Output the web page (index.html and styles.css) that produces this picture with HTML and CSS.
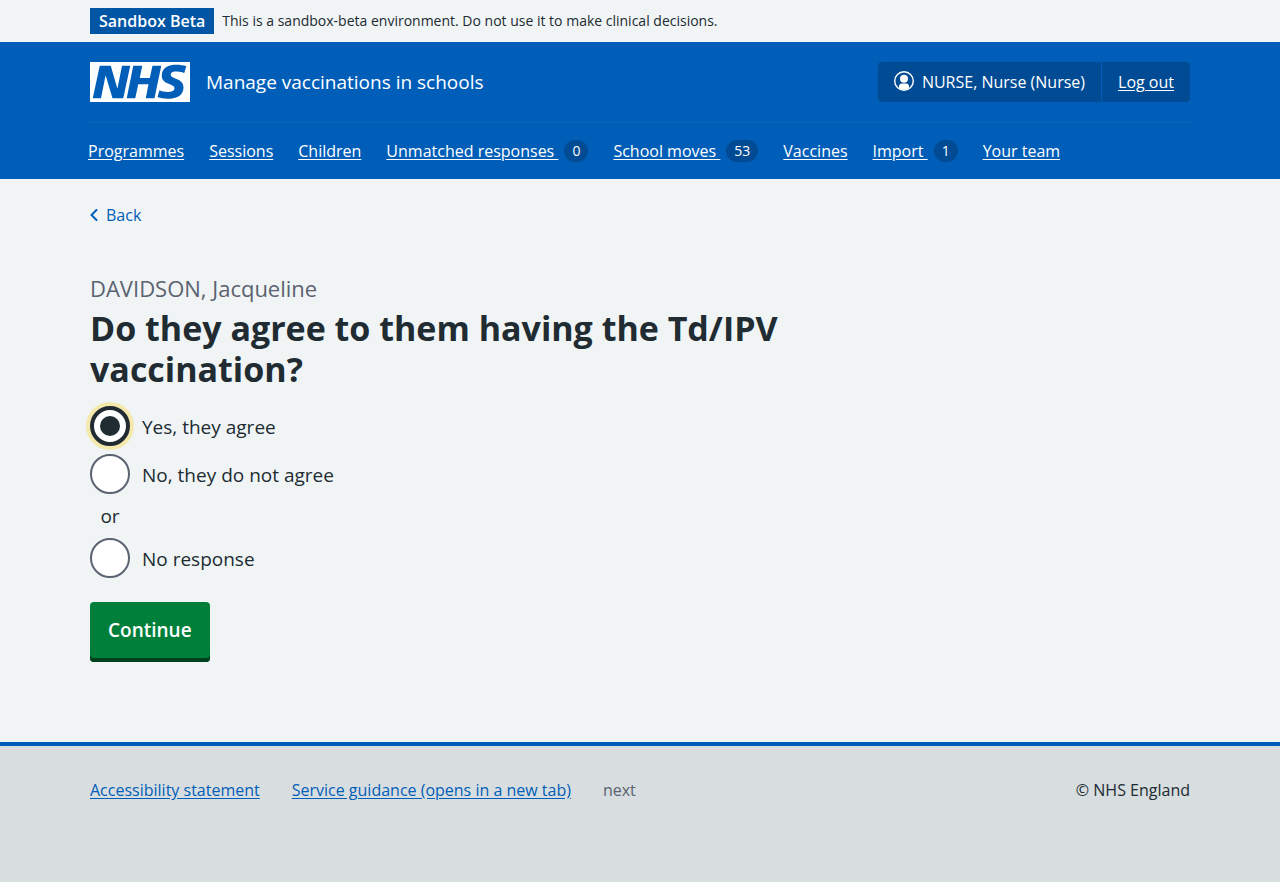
FILE: index.html
```html
<!DOCTYPE html>
<html lang="en">
<head>
<meta charset="utf-8">
<meta name="viewport" content="width=device-width, initial-scale=1">
<title>Do they agree to them having the Td/IPV vaccination? – Manage vaccinations in schools</title>
<link rel="stylesheet" href="styles.css">
</head>
<body>
<div class="environment">
  <div class="container environment-row">
    <strong class="environment-tag">Sandbox Beta</strong>
    <span class="environment-text">This is a sandbox-beta environment. Do not use it to make clinical decisions.</span>
  </div>
</div>

<header class="header">
  <div class="container">
    <div class="header-top">
      <a class="header-service" href="#">
        <svg class="header-logo" viewBox="0 0 40 16" role="img" aria-label="NHS">
          <path fill="#fff" d="M0 0h40v16H0z"/>
          <path fill="#005eb8" d="M3.9 1.5h4.4l2.6 9h.1l1.8-9h3.3l-2.8 13H9l-2.7-9h-.1l-1.8 9H1.1M17.3 1.5h3.6l-1 4.9h4L25 1.5h3.5l-2.7 13h-3.5l1.1-5.6h-4.1l-1.2 5.6h-3.4M37.7 4.4c-.7-.3-1.6-.6-2.9-.6-1.4 0-2.5.2-2.5 1.3 0 1.8 5.1 1.2 5.1 5.1 0 3.6-3.3 4.5-6.4 4.5-1.3 0-2.9-.3-4-.7l.8-2.7c.7.4 2.1.7 3.2.7s2.8-.2 2.8-1.5c0-2.1-5.1-1.3-5.1-5 0-3.4 2.9-4.4 5.8-4.4 1.6 0 3.1.2 4 .6"/>
        </svg>
        <span>Manage vaccinations in schools</span>
      </a>
      <div class="account">
        <span class="account-item">
          <svg class="account-icon" viewBox="0 0 20 20" aria-hidden="true">
            <circle cx="10" cy="10" r="9.3" fill="none" stroke="#fff" stroke-width="1.4"/>
            <circle cx="10" cy="7.700" r="4" fill="#fff"/>
            <path fill="#fff" d="M5 17v-1.800c0-1.700 1.300-2.700 2.800-2.700h4.400c1.500 0 2.800 1 2.800 2.700V17c-1.400 1.100-3 1.800-5 1.800S6.400 18.100 5 17z"/>
          </svg>
          <span>NURSE, Nurse (Nurse)</span>
        </span>
        <a class="account-item account-link" href="#">Log out</a>
      </div>
    </div>
    <div class="nav-wrap">
      <nav class="nav" aria-label="Menu">
        <a class="nav-link" href="#">Programmes</a>
        <a class="nav-link" href="#">Sessions</a>
        <a class="nav-link" href="#">Children</a>
        <a class="nav-link" href="#"><span class="nav-text">Unmatched responses </span><span class="count">0</span></a>
        <a class="nav-link" href="#"><span class="nav-text">School moves </span><span class="count">53</span></a>
        <a class="nav-link" href="#">Vaccines</a>
        <a class="nav-link" href="#"><span class="nav-text">Import </span><span class="count">1</span></a>
        <a class="nav-link" href="#">Your team</a>
      </nav>
    </div>
  </div>
</header>

<div class="container page">
  <a class="back" href="#">
    <svg class="back-icon" viewBox="0 0 8 12" aria-hidden="true"><path d="M6.500 1 1.500 6l5 5" fill="none" stroke="currentColor" stroke-width="2" stroke-linecap="round" stroke-linejoin="round"/></svg>
    <span>Back</span>
  </a>
  <main class="main">
    <form>
      <fieldset class="fieldset">
        <legend class="legend">
          <span class="caption">DAVIDSON, Jacqueline</span>
          <h1 class="heading">Do they agree to them having the Td/IPV vaccination?</h1>
        </legend>
        <div class="radios">
          <div class="radio"><input class="radio-input" type="radio" name="response" id="agree" checked><label class="radio-label" for="agree">Yes, they agree</label></div>
          <div class="radio"><input class="radio-input" type="radio" name="response" id="disagree"><label class="radio-label" for="disagree">No, they do not agree</label></div>
          <div class="divider">or</div>
          <div class="radio"><input class="radio-input" type="radio" name="response" id="none"><label class="radio-label" for="none">No response</label></div>
        </div>
      </fieldset>
      <button class="button" type="submit">Continue</button>
    </form>
  </main>
</div>

<footer class="footer">
  <div class="container footer-row">
    <div class="footer-links">
      <a href="#">Accessibility statement</a>
      <a href="#">Service guidance (opens in a new tab)</a>
      <span class="footer-version">next</span>
    </div>
    <span>© NHS England</span>
  </div>
</footer>
</body>
</html>
```
FILE: styles.css
```css
* {
  box-sizing: border-box;
}

html {
  background: #d8dde0;
}

body {
  display: flex;
  flex-direction: column;
  min-height: 100vh;
  margin: 0;
  background: #f0f4f5;
  color: #212b32;
  font-family: "Open Sans", "Noto Sans", sans-serif;
  font-size: 16px;
  line-height: 24px;
}

.container {
  width: 100%;
  max-width: 1164px;
  margin: 0 auto;
  padding: 0 32px;
}

.environment {
  padding: 8px 0;
}

.environment-row {
  display: flex;
  align-items: center;
  gap: 8px;
  font-size: 14px;
}

.environment-tag {
  padding: 1px 9px;
  background: #0055a5;
  color: #fff;
  font-size: 16px;
  font-weight: 600;
}

.header {
  background: #005eb8;
  color: #fff;
}

.header a {
  color: #fff;
}

.header-top {
  display: flex;
  justify-content: space-between;
  align-items: center;
  padding: 20px 0;
}

.header .header-service {
  display: flex;
  align-items: center;
  gap: 16px;
  font-size: 19px;
  text-decoration: none;
}

.header-logo {
  display: block;
  width: 100px;
  height: 40px;
}

.account {
  display: flex;
  border-radius: 4px;
  background: #004b93;
}

.account-item {
  display: flex;
  align-items: center;
  gap: 8px;
  padding: 8px 16px;
}

.account-link {
  border-left: 1px solid #005eb8;
  text-underline-offset: 2px;
}

.account-icon {
  width: 20px;
  height: 20px;
  margin-bottom: 2px;
}

.nav-wrap {
  border-top: 1px solid #0c65bb;
}

.nav {
  display: flex;
  gap: 25px;
  margin-left: -2px;
  padding: 16px 0;
}

.nav-link {
  display: flex;
  align-items: center;
  gap: 6px;
  text-underline-offset: 2px;
  white-space: nowrap;
}

.nav-link:has(.count) {
  text-decoration: none;
}

.nav-text {
  text-decoration: underline;
  white-space: pre;
}

.count {
  padding: 0 8px;
  border-radius: 11px;
  background: #004b93;
  font-size: 14px;
  line-height: 22px;
}

.page {
  flex: 1 0 auto;
  padding-top: 24px;
  padding-bottom: 80px;
}

.back {
  display: inline-flex;
  align-items: center;
  gap: 8px;
  color: #005eb8;
  text-decoration: none;
}

.back-icon {
  width: 8px;
  height: 12px;
}

.main {
  max-width: 734px;
  padding-top: 48px;
}

.fieldset {
  min-width: 0;
  margin: 0 0 24px;
  padding: 0;
  border: 0;
}

.legend {
  margin: 0 0 16px;
  padding: 0;
}

.caption {
  display: block;
  margin-bottom: 7px;
  color: #5b6270;
  font-size: 22px;
  line-height: 26px;
}

.heading {
  margin: 0;
  font-size: 34px;
  font-weight: 700;
  line-height: 41px;
}

.radios {
  display: flex;
  flex-direction: column;
  gap: 8px;
  font-size: 19px;
}

.radio {
  display: flex;
  align-items: center;
  gap: 12px;
}

.radio-label {
  padding-top: 2px;
}

.radio-input {
  appearance: none;
  display: grid;
  place-items: center;
  width: 40px;
  height: 40px;
  margin: 0;
  border: 2px solid #5b6270;
  border-radius: 50%;
  background: #fff;
}

.radio-input:checked {
  border: 4px solid #212b32;
  box-shadow: 0 0 0 4px #f4e8ad;
}

.radio-input:checked::before {
  content: "";
  width: 20px;
  height: 20px;
  border-radius: 50%;
  background: #212b32;
}

.divider {
  width: 40px;
  line-height: 28px;
  text-align: center;
}

.button {
  padding: 14px 18px 18px;
  border: 0;
  border-radius: 4px;
  background: #007f3b;
  box-shadow: inset 0 -4px 0 #00401e;
  color: #fff;
  font: inherit;
  font-size: 19px;
  font-weight: 600;
  line-height: 28px;
}

.footer {
  padding: 32px 0 80px;
  border-top: 4px solid #005eb8;
  background: #d8dde0;
}

.footer-row,
.footer-links {
  display: flex;
  flex-wrap: wrap;
  gap: 0 32px;
}

.footer-row {
  justify-content: space-between;
}

.footer a {
  color: #005eb8;
  text-underline-offset: 2px;
}

.footer-version {
  color: #5b6270;
}
```
